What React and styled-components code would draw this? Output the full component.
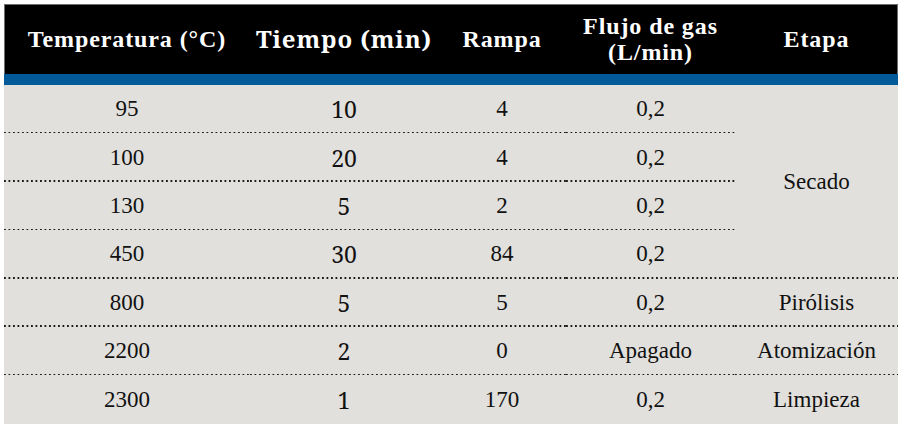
import styled, { createGlobalStyle } from "styled-components";

const GlobalStyle = createGlobalStyle`
  body {
    margin: 0;
    background: #ffffff;
  }
`;

const COLS = "246px 188px 128px 169px 163px";
const FONTS = [
  `"Liberation Serif", serif`,
  `"Noto Serif", serif`,
  `serif`,
  `"Times New Roman", serif`,
  `Georgia, serif`,
];

const headers = [
  ["Temperatura (°C)"],
  ["Tiempo (min)"],
  ["Rampa"],
  ["Flujo de gas", "(L/min)"],
  ["Etapa"],
];

const rows = [
  { temp: "95", time: "10", ramp: "4", flow: "0,2", stage: "Secado", span: 4 },
  { temp: "100", time: "20", ramp: "4", flow: "0,2" },
  { temp: "130", time: "5", ramp: "2", flow: "0,2" },
  { temp: "450", time: "30", ramp: "84", flow: "0,2" },
  { temp: "800", time: "5", ramp: "5", flow: "0,2", stage: "Pirólisis", span: 1 },
  { temp: "2200", time: "2", ramp: "0", flow: "Apagado", stage: "Atomización", span: 1 },
  { temp: "2300", time: "1", ramp: "170", flow: "0,2", stage: "Limpieza", span: 1 },
];

const Page = styled.div`
  padding: 4px 8px 0 4px;
`;

const Table = styled.div`
  width: 894px;
  display: flex;
  flex-direction: column;
`;

const Header = styled.div`
  display: grid;
  grid-template-columns: ${COLS};
  height: 70px;
  background: #000;
  box-shadow: inset 1px 1px 0 #6f6f6f, inset -1px 0 0 #6f6f6f;
`;

const HeadCell = styled.div`
  display: flex;
  flex-direction: column;
  align-items: center;
  justify-content: center;
  color: #fff;
  font-family: ${(p) => FONTS[p.$col]};
  font-weight: bold;
  font-size: 24px;
  letter-spacing: 0.9px;
  line-height: 26px;
  text-align: center;
`;

const BlueBar = styled.div`
  height: 11px;
  background: #035a98;
`;

const Body = styled.div`
  display: grid;
  grid-template-columns: ${COLS};
  grid-auto-rows: 48.4px;
  background: #e1e0dc;
  color: #111;
`;

const Cell = styled.div`
  display: flex;
  align-items: center;
  justify-content: center;
  font-family: ${(p) => FONTS[p.$col]};
  font-size: 23px;
  grid-row: ${(p) => (p.$span > 1 ? `span ${p.$span}` : "auto")};
  background-image: ${(p) =>
    p.$dotted
      ? "linear-gradient(to right, #1a1a1a 1.6px, transparent 1.6px)"
      : "none"};
  background-size: 4.5px 1.6px;
  background-repeat: repeat-x;
  background-position: left bottom;
`;

function App() {
  return (
    <>
      <GlobalStyle />
      <Page>
        <Table>
          <Header>
            {headers.map((lines, i) => (
              <HeadCell key={i} $col={i}>
                {lines.map((l, j) => (
                  <span key={j}>{l}</span>
                ))}
              </HeadCell>
            ))}
          </Header>
          <BlueBar />
          <Body>
            {rows.map((r, i) => {
              const dotted = i !== rows.length - 1;
              return [
                <Cell key={`t${i}`} $col={0} $dotted={dotted}>{r.temp}</Cell>,
                <Cell key={`m${i}`} $col={1} $dotted={dotted}>{r.time}</Cell>,
                <Cell key={`r${i}`} $col={2} $dotted={dotted}>{r.ramp}</Cell>,
                <Cell key={`f${i}`} $col={3} $dotted={dotted}>{r.flow}</Cell>,
                r.stage && (
                  <Cell key={`s${i}`} $col={4} $span={r.span} $dotted={dotted}>
                    {r.stage}
                  </Cell>
                ),
              ];
            })}
          </Body>
        </Table>
      </Page>
    </>
  );
}

export default App;
